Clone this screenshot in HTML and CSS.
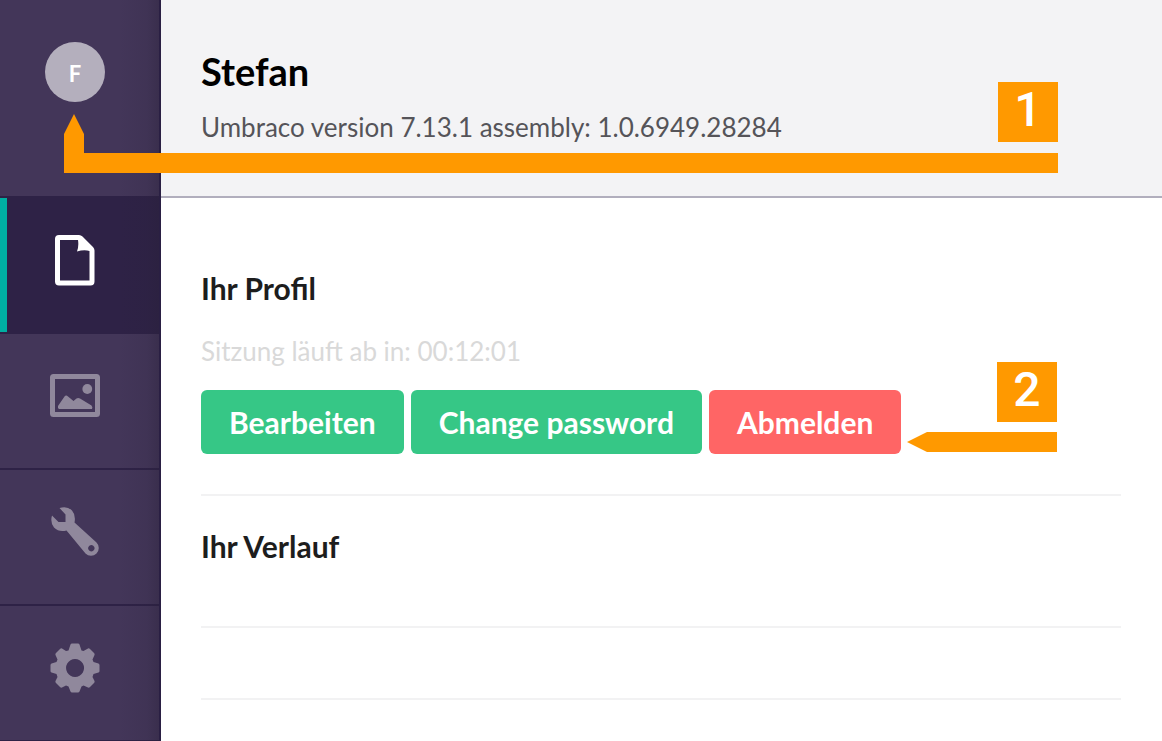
FILE: index.html
```html
<!DOCTYPE html>
<html lang="de">
<head>
    <meta charset="UTF-8">
    <meta name="viewport" content="width=device-width, initial-scale=1.0">
    <title>Umbraco</title>
    <link rel="stylesheet" href="styles.css">
</head>
<body>

    <nav class="sidebar">
        <button class="user" type="button"><span class="avatar">F</span></button>

        <a class="section active" href="#content" aria-label="Content">
            <svg width="50" height="52" viewBox="0 0 50 52">
                <path fill-rule="evenodd" d="M9 1H29Q31 1 32.500 2.500L43 13Q44.500 14.500 44.500 16.500V47.500Q44.500 51.500 40.500 51.500H9Q5 51.500 5 47.500V5Q5 1 9 1zM10 6V46.500H39.500V17Q34 15.500 27 17.500Q29 12 28 6z" fill="currentColor"/>
            </svg>
        </a>
        <a class="section" href="#media" aria-label="Media">
            <svg width="50" height="52" viewBox="0 0 50 52">
                <rect x="2.500" y="6.500" width="45" height="38" rx="1" fill="none" stroke="currentColor" stroke-width="5"/>
                <circle cx="37.300" cy="19" r="4.900" fill="currentColor"/>
                <path d="M8 36L14.500 26.500Q16 24.500 18 26.500L23.500 31L26.500 28.500Q28 27.500 30 28.500L41.500 35.500Q43 37 42 39H9Q7.500 38.500 8 36z" fill="currentColor"/>
            </svg>
        </a>
        <a class="section" href="#settings" aria-label="Settings">
            <svg width="50" height="52" viewBox="0 0 50 52">
                <path fill-rule="evenodd" d="M9.500 2Q17 -.5 22 4.500Q26 9 24.500 16.500L46.500 36.500A7.500 7.500 0 0 1 35.500 47.500L16.500 24.500Q9 26.500 4 21.500Q0 16.500 2 9.500L8.500 16H15.500V8.500zM41.300 39a3.200 3.200 0 1 0 .1 0z" fill="currentColor"/>
            </svg>
        </a>
        <a class="section" href="#developer" aria-label="Developer">
            <svg width="50" height="52" viewBox="0 0 50 52">
                <path fill-rule="evenodd" d="M20.500 2.500Q21 1.500 22 1.500H28Q29 1.500 29.500 2.500L31.500 8.500L33.500 9L38 6.500Q39 6 40 7L44 11Q45 12 44.500 13L42.500 17.500L43.500 20L48.500 21.500Q49.500 22 49.500 23V29Q49.500 30 48.500 30.500L43.500 32L42.500 35L44.500 39Q45 40 44 41L40 45Q39 46 38 45.500L33.500 43.500L31.500 44.500L29.500 49.500Q29 50.500 28 50.500H22Q21 50.500 20.500 49.500L18.500 44.500L16 43.500L12 45.500Q11 46 10 45L6 41Q5 40 5.500 39L7.500 35L6.500 32L1.500 30.500Q.5 30 .5 29V23Q.5 22 1.500 21.500L6.500 20L7.500 17.500L5.500 13Q5 12 6 11L10 7Q11 6 12 6.500L16 9L18.500 8.500zM25 17a9 9 0 1 0 .1 0z" fill="currentColor"/>
            </svg>
        </a>
    </nav>

    <main class="panel">
        <header class="panel-header">
            <h1>Stefan</h1>
            <p class="version">Umbraco version 7.13.1 assembly: 1.0.6949.28284</p>
            <span class="marker marker-user">1</span>
        </header>

        <section class="profile">
            <h2>Ihr Profil</h2>
            <p class="session">Sitzung läuft ab in: 00:12:01</p>
            <div class="actions">
                <button class="btn" type="button">Bearbeiten</button>
                <button class="btn" type="button">Change password</button>
                <button class="btn btn-danger" type="button">Abmelden</button>
                <span class="marker marker-logout">2</span>
                <span class="arrow arrow-logout"></span>
            </div>
        </section>

        <section class="history">
            <h2>Ihr Verlauf</h2>
            <ul class="history-list">
                <li></li>
                <li></li>
            </ul>
        </section>
    </main>

    <span class="arrow arrow-user"></span>

</body>
</html>
```
FILE: styles.css
```css
* {
    box-sizing: border-box;
}

body {
    position: relative;
    display: flex;
    height: 100vh;
    margin: 0;
    overflow: hidden;
    background-color: #fff;
    color: #1d1d1d;
    font-family: Lato, sans-serif;
}

h1, h2, p, ul {
    margin: 0;
    padding: 0;
}

/* Sidebar */
.sidebar {
    position: relative;
    flex: 0 0 161px;
    overflow: hidden;
    background-color: #433659;
    border-right: 2px solid #2a1f43;
}

/* shadow cast by the panel on the right */
.sidebar::after {
    content: "";
    position: absolute;
    inset: 0 0 0 auto;
    width: 40px;
    background: linear-gradient(to right, rgba(40, 32, 55, 0), rgba(40, 32, 55, 0.12) 70%, rgba(40, 32, 55, 0.35));
    pointer-events: none;
}

.user {
    display: flex;
    justify-content: center;
    width: 100%;
    height: 198px;
    padding: 42px 9px 0 0;
    background: none;
    border: none;
    border-bottom: 2px solid #2e2246;
    cursor: pointer;
}

.avatar {
    width: 60px;
    height: 60px;
    border-radius: 50%;
    background-color: #b4afbd;
    color: #fff;
    font: bold 22px/64px Lato, sans-serif;
    text-align: center;
}

.section {
    display: flex;
    align-items: center;
    justify-content: center;
    height: 136px;
    padding: 0 16px 10px 7px;
    border-bottom: 2px solid #2e2246;
    color: #90889c;
}

.section.active {
    background: linear-gradient(#00afa2, #00afa2) left / 7px 100% no-repeat #2e2246;
    background-clip: padding-box;
    color: #fff;
}

/* Panel */
.panel {
    flex: 1;
    min-width: 0;
}

.panel-header {
    position: relative;
    height: 198px;
    padding: 47px 40px 0;
    background-color: #f3f3f5;
    border-bottom: 2px solid #b1aebd;
}

h1 {
    color: #000;
    font-size: 38px;
    line-height: 48px;
}

.version {
    margin-top: 16px;
    color: #555459;
    font-size: 26px;
    line-height: 32px;
}

.profile, .history {
    margin: 0 41px 0 40px;
}

.profile {
    padding: 70px 0 40px;
    border-bottom: 2px solid #f2f2f3;
}

.history {
    padding-top: 30px;
}

h2 {
    font-size: 30px;
    line-height: 40px;
}

.session {
    margin-top: 27px;
    color: #d9d9d9;
    font-size: 26px;
    line-height: 32px;
}

.actions {
    position: relative;
    display: flex;
    gap: 7px;
    margin-top: 23px;
}

.btn {
    height: 64px;
    padding: 0 28px;
    border: none;
    border-radius: 6px;
    background-color: #36c786;
    color: #fff;
    font: bold 30px/40px Lato, sans-serif;
    cursor: pointer;
}

.btn-danger {
    background-color: #ff6565;
}

.history-list {
    padding-top: 60px;
    list-style: none;
}

.history-list li {
    height: 72px;
    border-top: 2px solid #f2f2f3;
}

/* Numbered markers */
.marker {
    position: absolute;
    width: 60px;
    height: 60px;
    background-color: #ff9900;
    color: #fff;
    font: 500 48px/56px Roboto, sans-serif;
    text-align: center;
}

.marker-user {
    top: 82px;
    right: 104px;
}

.marker-logout {
    top: -28px;
    right: 64px;
}

.arrow {
    position: absolute;
    background-color: #ff9900;
}

.arrow-user {
    top: 114px;
    left: 64px;
    right: 104px;
    height: 59px;
    clip-path: polygon(10px 0, 20px 20px, 20px 39px, 100% 39px, 100% 100%, 0 100%, 0 20px);
}

.arrow-logout {
    top: 42px;
    right: 64px;
    width: 150px;
    height: 20px;
    clip-path: polygon(0 50%, 20px 0, 100% 0, 100% 100%, 20px 100%);
}
```
